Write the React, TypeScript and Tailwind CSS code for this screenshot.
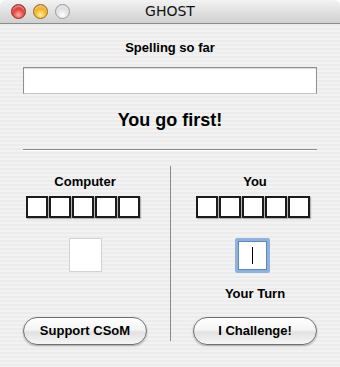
import React from "react";

const LetterRow = () => (
  <div className="flex gap-px">
    {[0, 1, 2, 3, 4].map((i) => (
      <div
        key={i}
        className="h-[22px] w-[22px] border-2 border-[#1c1c1c] bg-white shadow-[1px_1px_1px_rgba(0,0,0,0.25)]"
      />
    ))}
  </div>
);

const AquaButton = ({ label }: { label: string }) => (
  <button className="h-[28px] w-[124px] rounded-full border border-[#6f6f6f] bg-[linear-gradient(to_bottom,#ffffff_0%,#f4f4f4_45%,#e2e2e2_55%,#f6f6f6_100%)] text-[13px] font-bold text-black shadow-[0_1px_2px_rgba(0,0,0,0.3)]">
    {label}
  </button>
);

export default function App() {
  return (
    <div className="h-[367px] w-[340px] bg-white font-['Liberation_Sans',Arial,sans-serif] text-black">
      <div className="flex h-full flex-col overflow-hidden rounded-t-[6px]">
        {/* title bar */}
        <div className="grid h-[24px] shrink-0 grid-cols-[1fr_auto_1fr] items-center border-b border-[#8c8c8c] bg-[linear-gradient(to_bottom,#f2f2f2,#d0d0d0)]">
          <div className="flex items-center gap-[7px] pl-[11px]">
            <span className="h-[15px] w-[15px] rounded-full border border-[#8a2a2a] bg-[radial-gradient(circle_at_50%_75%,#ffb0a8,#e23a32_50%,#a8160f)] shadow-[inset_0_2px_2px_rgba(255,255,255,0.5)]" />
            <span className="h-[15px] w-[15px] rounded-full border border-[#9a6a10] bg-[radial-gradient(circle_at_50%_75%,#fff2a0,#f5b123_50%,#c27a05)] shadow-[inset_0_2px_2px_rgba(255,255,255,0.5)]" />
            <span className="h-[15px] w-[15px] rounded-full border border-[#9a9a9a] bg-[radial-gradient(circle_at_50%_75%,#ffffff,#e0e0e0_50%,#b8b8b8)] shadow-[inset_0_2px_2px_rgba(255,255,255,0.6)]" />
          </div>
          <div className="font-['DejaVu_Sans',sans-serif] text-[14px] text-[#111]">GHOST</div>
          <div />
        </div>

        {/* body */}
        <div className="flex flex-1 flex-col bg-[repeating-linear-gradient(to_bottom,#ececec_0px,#ececec_2px,#f2f2f2_2px,#f2f2f2_4px)] px-[23px]">
          <div className="mt-[16px] text-center text-[13px] font-bold leading-[16px]">Spelling so far</div>
          <div className="mt-[11px] h-[27px] border border-[#8e8e8e] border-b-[#c4c4c4] bg-white shadow-[inset_0_1px_1px_rgba(0,0,0,0.15)]" />
          <div className="mt-[15px] text-center text-[18px] font-bold leading-[22px]">You go first!</div>
          <div className="mt-[18px] h-[2px] border-t border-[#8a8a8a] bg-white" />

          <div className="mt-[15px] grid grid-cols-[124px_1fr_1px_1fr_124px]">
            {/* computer */}
            <div className="flex flex-col items-center pt-[8px]">
              <div className="text-[13px] font-bold leading-[16px]">Computer</div>
              <div className="mt-[6px] -ml-[5px]">
                <LetterRow />
              </div>
              <div className="mt-[20px] h-[34px] w-[33px] border border-[#d2d2d2] bg-white" />
              <div className="mt-auto">
                <AquaButton label="Support CSoM" />
              </div>
            </div>
            <div />
            <div className="mb-[4px] bg-[#8a8a8a]" />
            <div />
            {/* you */}
            <div className="flex flex-col items-center pt-[8px]">
              <div className="text-[13px] font-bold leading-[16px]">You</div>
              <div className="mt-[6px] -ml-[5px]">
                <LetterRow />
              </div>
              <div className="mt-[20px] -ml-[5px] flex h-[35px] w-[35px] items-center justify-center rounded-[2px] border-[3px] border-[#8fb2dc] bg-white shadow-[inset_0_0_0_1px_#5f86bd]">
                <div className="h-[17px] w-px bg-black" />
              </div>
              <div className="mt-[13px] text-[13px] font-bold leading-[16px]">Your Turn</div>
              <div className="mt-[15px]">
                <AquaButton label="I Challenge!" />
              </div>
            </div>
          </div>
        </div>
      </div>
    </div>
  );
}
